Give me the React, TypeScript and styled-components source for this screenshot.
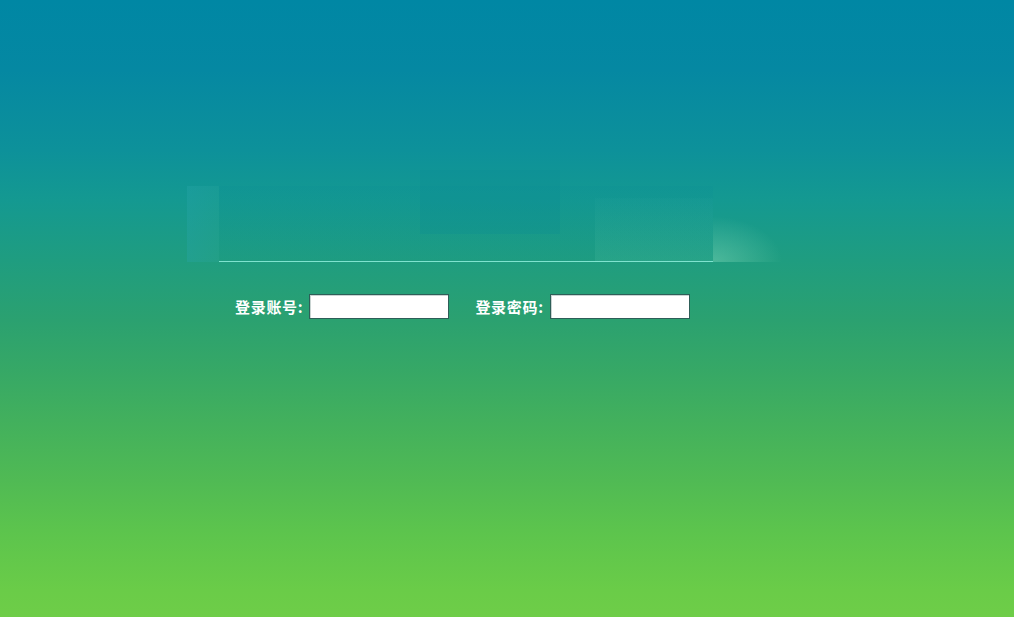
import React from "react";
import styled, { createGlobalStyle } from "styled-components";

const Global = createGlobalStyle`
  html, body { margin: 0; padding: 0; }
  body {
    font-family: "Noto Sans CJK SC", "Liberation Sans", sans-serif;
    overflow: hidden;
  }
`;

const Page = styled.div`
  width: 1014px;
  height: 617px;
  background: linear-gradient(
    180deg,
    #0087a4 0px,
    #0588a2 70px,
    #0d919a 150px,
    #149991 200px,
    #1f9d80 260px,
    #2ba170 320px,
    #36a866 370px,
    #42b05d 420px,
    #50ba54 480px,
    #5cc44d 530px,
    #6acc48 590px,
    #6ecd48 617px
  );
  display: flex;
  flex-direction: column;
  padding-top: 186px;
  box-sizing: border-box;
`;

const BannerWrap = styled.div`
  margin-left: 187px;
  width: 526px;
  height: 76px;
  position: relative;
  display: flex;
`;

const BannerEdge = styled.div`
  width: 32px;
  background: linear-gradient(90deg, rgba(40,165,170,0.35), rgba(50,170,160,0.2));
`;

const BannerPanel = styled.div`
  flex: 1;
  position: relative;
  background: linear-gradient(180deg, rgba(10,140,150,0.18), rgba(20,150,140,0.1));
  border-bottom: 1px solid #7fe3cf;
`;

const BannerBlock = styled.div`
  position: absolute;
  left: 201px;
  top: -16px;
  width: 140px;
  height: 64px;
  background: rgba(8, 135, 150, 0.22);
`;

const BannerLight = styled.div`
  position: absolute;
  right: 0;
  top: 12px;
  width: 118px;
  height: 63px;
  background: linear-gradient(180deg, rgba(60,180,170,0.06), rgba(90,200,170,0.16));
`;

const Glow = styled.div`
  position: absolute;
  left: 526px;
  top: 30px;
  width: 70px;
  height: 46px;
  background: radial-gradient(ellipse at 0% 100%, rgba(160,235,205,0.35), rgba(120,220,190,0) 70%);
`;

const FormRow = styled.div`
  margin-top: 32px;
  margin-left: 235px;
  display: flex;
  align-items: center;
  gap: 26px;
`;

const Field = styled.label`
  display: flex;
  align-items: center;
  gap: 6px;
`;

const Label = styled.span`
  color: #ffffff;
  font-size: 15px;
  font-weight: 700;
  line-height: 25px;
  letter-spacing: 0.7px;
  white-space: nowrap;
`;

const Input = styled.input`
  width: 140px;
  height: 25px;
  box-sizing: border-box;
  border: 1px solid #2e5e58;
  background: #ffffff;
  box-shadow: inset 1px 1px 0 #c9d4d2;
  padding: 0 3px;
  outline: none;
  font-size: 13px;
`;

export default function App() {
  return (
    <>
      <Global />
      <Page>
        <BannerWrap>
          <BannerEdge />
          <BannerPanel>
            <BannerBlock />
            <BannerLight />
          </BannerPanel>
          <Glow />
        </BannerWrap>
        <FormRow>
          <Field>
            <Label>登录账号:</Label>
            <Input type="text" />
          </Field>
          <Field>
            <Label>登录密码:</Label>
            <Input type="password" />
          </Field>
        </FormRow>
      </Page>
    </>
  );
}
